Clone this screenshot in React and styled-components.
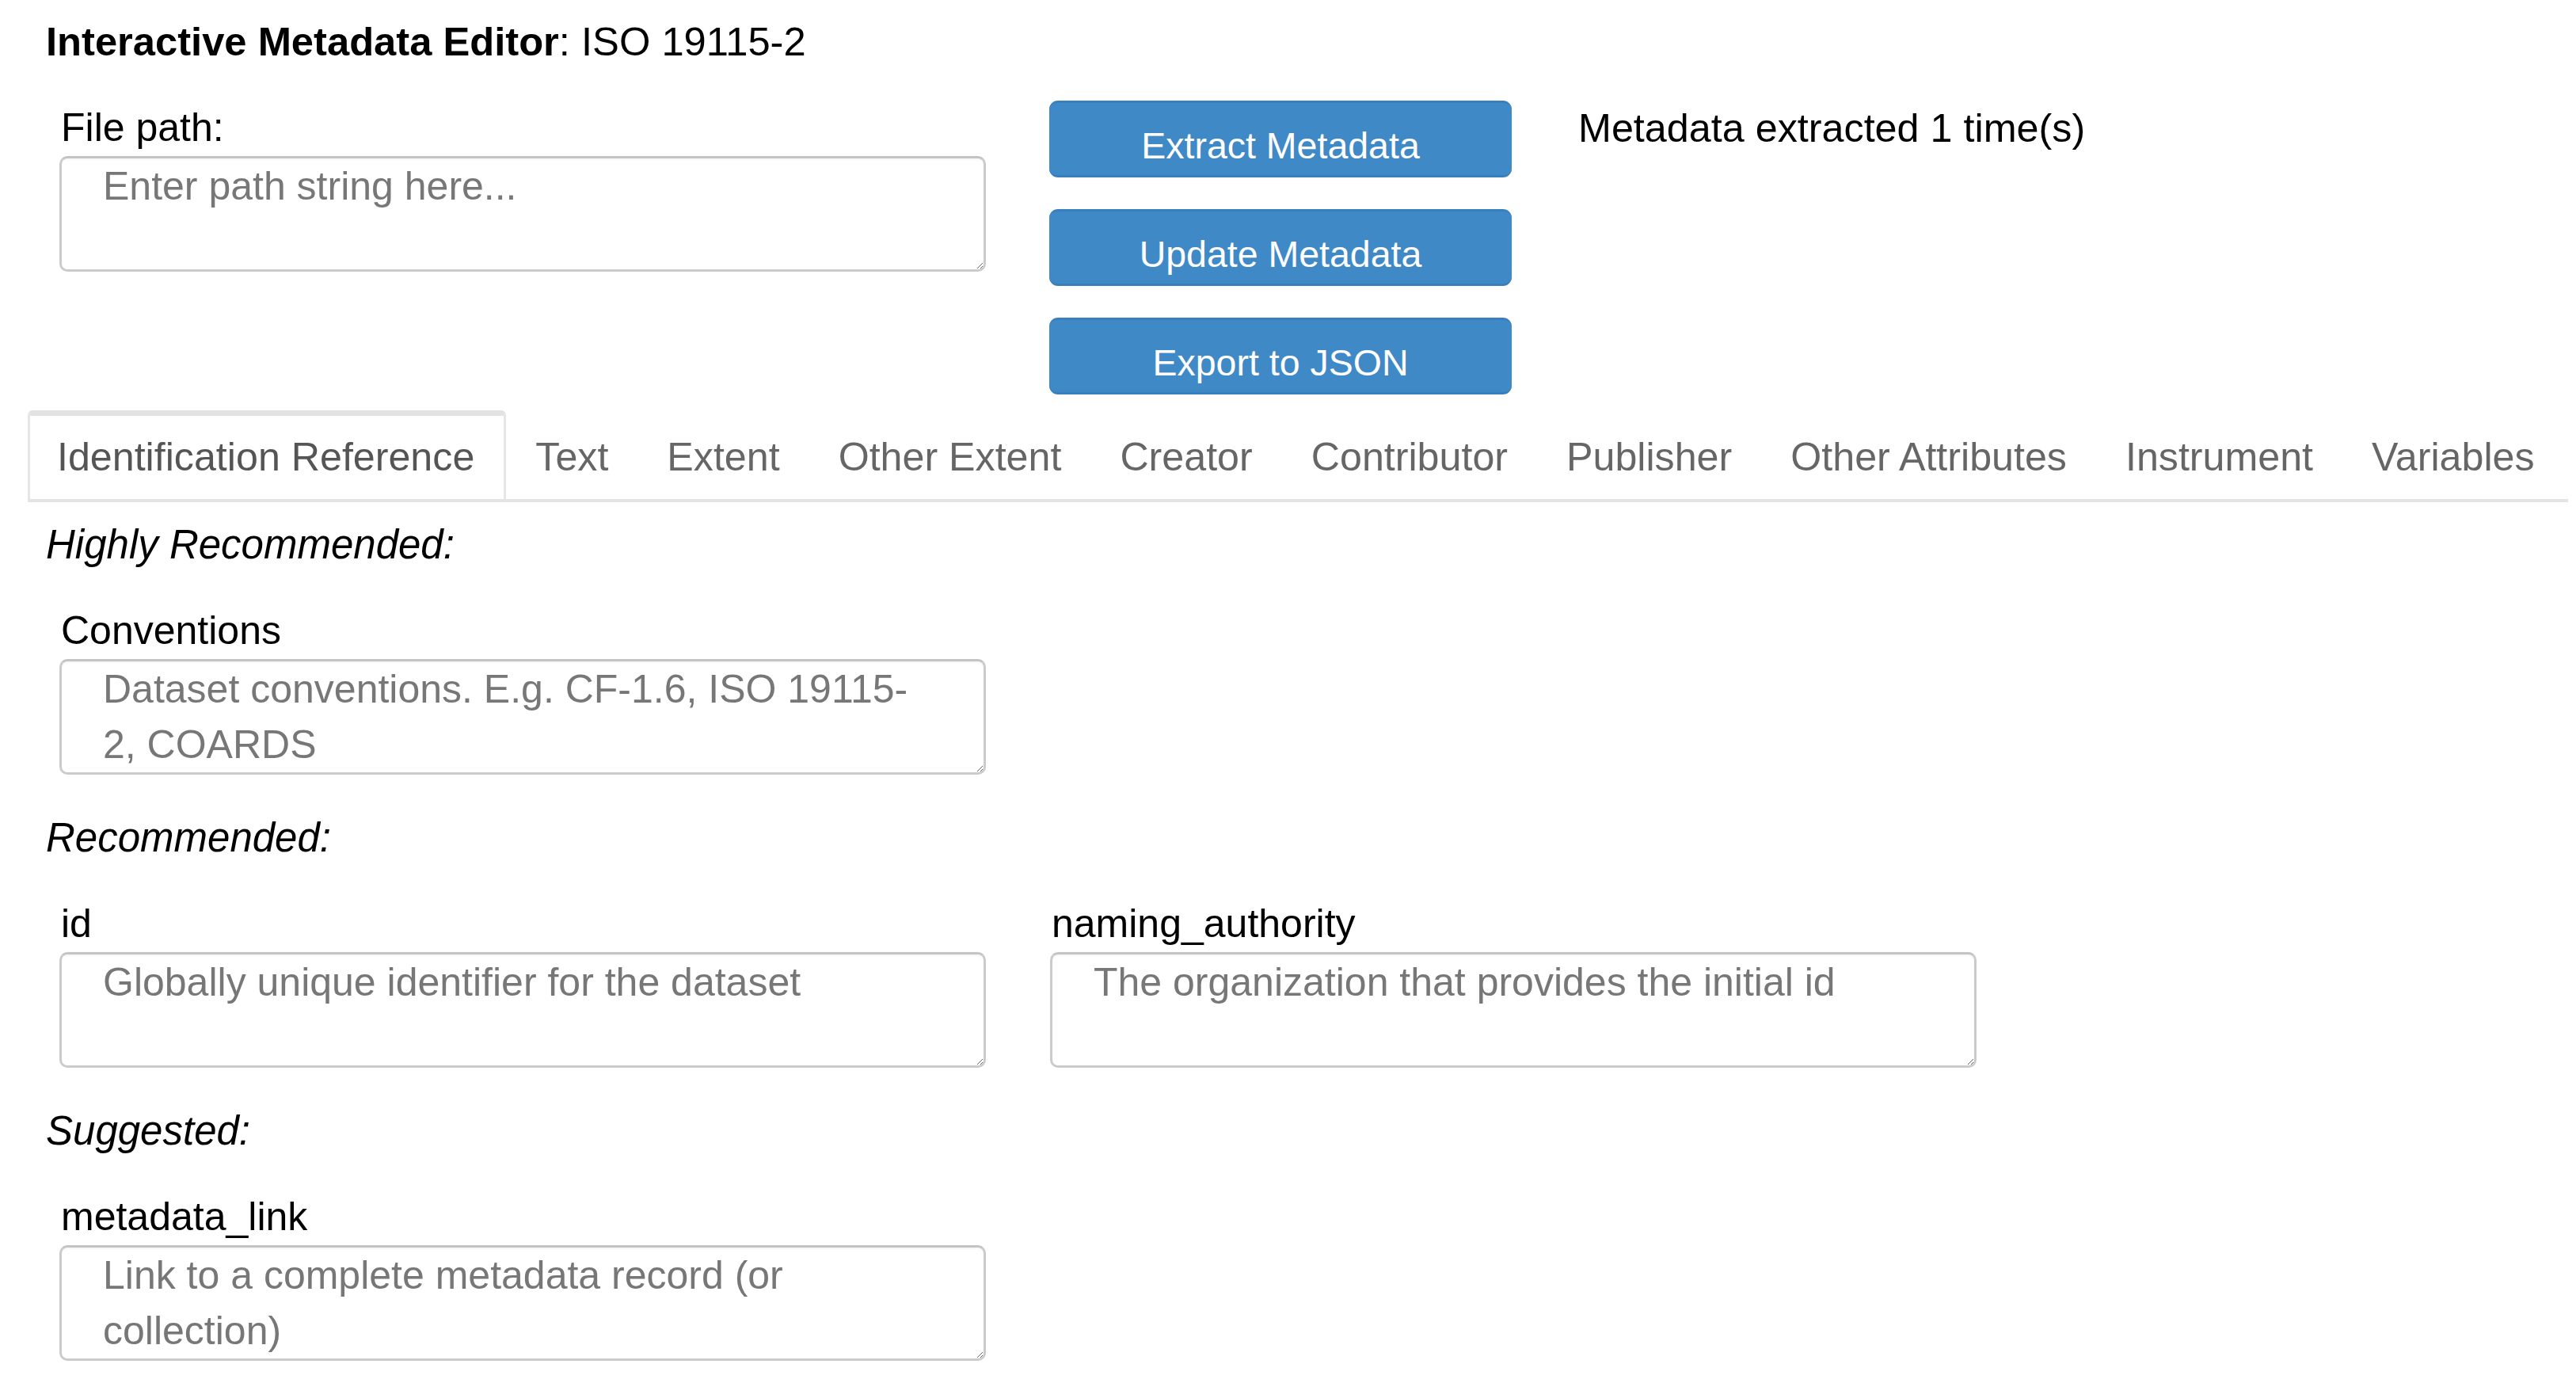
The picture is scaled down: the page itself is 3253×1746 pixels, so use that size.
import React from "react";
import styled, { createGlobalStyle } from "styled-components";

const GlobalStyle = createGlobalStyle`
  html, body {
    margin: 0;
    padding: 0;
    background: #ffffff;
  }
  body {
    font-family: "Liberation Sans", Arial, Helvetica, sans-serif;
    color: #000000;
  }
`;

const Page = styled.div`
  width: 3253px;
  box-sizing: border-box;
  padding: 23px 10px 0 35px;
`;

const Title = styled.div`
  margin-left: 23px;
  font-size: 50.7px;
  line-height: 60px;
  white-space: nowrap;
  b {
    font-weight: 700;
  }
`;

const TopRow = styled.div`
  display: flex;
  align-items: flex-start;
  margin: 44px 0 0 40px;
`;

const Field = styled.div`
  display: flex;
  flex-direction: column;
  width: 1170px;
  margin-top: ${(p) => p.$top || 0}px;
`;

const Label = styled.label`
  font-size: 50px;
  line-height: 60px;
  padding-left: 2px;
  margin-bottom: 6px;
  white-space: nowrap;
`;

const TextArea = styled.textarea`
  box-sizing: border-box;
  width: 100%;
  height: 146px;
  margin: 0;
  padding: 0 76px 0 52px;
  border: 3px solid #cbcbcb;
  border-top-color: #c4c4c4;
  border-radius: 10px;
  box-shadow: inset 0 2px 2px rgba(0, 0, 0, 0.04);
  font-family: "Liberation Sans", Arial, Helvetica, sans-serif;
  font-size: 50px;
  line-height: 70px;
  color: #000;
  background: #fff;
  outline: none;
  resize: both;
  &::placeholder {
    color: #777777;
    opacity: 1;
  }
`;

const ButtonColumn = styled.div`
  display: flex;
  flex-direction: column;
  gap: 40px;
  width: 584px;
  margin-left: 80px;
`;

const Button = styled.button`
  box-sizing: border-box;
  height: 97px;
  width: 100%;
  display: flex;
  align-items: center;
  justify-content: center;
  padding: 16px 0 0;
  border: none;
  border-top: 3px solid #3a7fbd;
  border-bottom: 3px solid #3a7fbd;
  border-radius: 11px;
  background: #3f89c7;
  color: #ffffff;
  font-family: "Liberation Sans", Arial, Helvetica, sans-serif;
  font-size: 46.5px;
  cursor: pointer;
`;

const Status = styled.div`
  margin: 5px 0 0 84px;
  font-size: 50.3px;
  line-height: 60px;
  white-space: nowrap;
`;

const TabBar = styled.div`
  display: flex;
  margin-top: 20px;
  border-bottom: 4px solid #e4e4e4;
`;

const Tab = styled.div`
  box-sizing: border-box;
  height: 112px;
  padding: 22px ${(p) => (p.$active ? 37 : 34)}px 0 34px;
  font-size: 50.2px;
  line-height: 60px;
  white-space: nowrap;
  color: ${(p) => (p.$active ? "#555555" : "#666666")};
  background: #ffffff;
  border-top: 7px solid ${(p) => (p.$active ? "#e2e2e2" : "transparent")};
  border-left: 3px solid ${(p) => (p.$active ? "#e6e6e6" : "transparent")};
  border-right: 3px solid ${(p) => (p.$active ? "#e6e6e6" : "transparent")};
  border-radius: 6px 6px 0 0;
`;

const Panel = styled.div`
  padding: 24px 0 0 23px;
`;

const Section = styled.section`
  margin-bottom: 50px;
`;

const Heading = styled.div`
  font-size: 51px;
  line-height: 60px;
  font-style: italic;
  margin-bottom: 48px;
`;

const FieldRow = styled.div`
  display: flex;
  gap: 81px;
  margin-left: 17px;
`;

const tabs = [
  "Identification Reference",
  "Text",
  "Extent",
  "Other Extent",
  "Creator",
  "Contributor",
  "Publisher",
  "Other Attributes",
  "Instrument",
  "Variables",
];

const sections = [
  {
    title: "Highly Recommended:",
    fields: [
      {
        label: "Conventions",
        placeholder: "Dataset conventions. E.g. CF-1.6, ISO 19115-2, COARDS",
      },
    ],
  },
  {
    title: "Recommended:",
    fields: [
      { label: "id", placeholder: "Globally unique identifier for the dataset" },
      {
        label: "naming_authority",
        placeholder: "The organization that provides the initial id",
      },
    ],
  },
  {
    title: "Suggested:",
    fields: [
      {
        label: "metadata_link",
        placeholder: "Link to a complete metadata record (or collection)",
      },
    ],
  },
];

export default function App() {
  return (
    <Page>
      <GlobalStyle />
      <Title>
        <b>Interactive Metadata Editor</b>: ISO 19115-2
      </Title>

      <TopRow>
        <Field $top={4}>
          <Label>File path:</Label>
          <TextArea placeholder="Enter path string here..." />
        </Field>
        <ButtonColumn>
          <Button>Extract Metadata</Button>
          <Button>Update Metadata</Button>
          <Button>Export to JSON</Button>
        </ButtonColumn>
        <Status>Metadata extracted 1 time(s)</Status>
      </TopRow>

      <TabBar>
        {tabs.map((t, i) => (
          <Tab key={t} $active={i === 0}>
            {t}
          </Tab>
        ))}
      </TabBar>

      <Panel>
        {sections.map((s) => (
          <Section key={s.title}>
            <Heading>{s.title}</Heading>
            <FieldRow>
              {s.fields.map((f) => (
                <Field key={f.label}>
                  <Label>{f.label}</Label>
                  <TextArea placeholder={f.placeholder} />
                </Field>
              ))}
            </FieldRow>
          </Section>
        ))}
      </Panel>
    </Page>
  );
}
